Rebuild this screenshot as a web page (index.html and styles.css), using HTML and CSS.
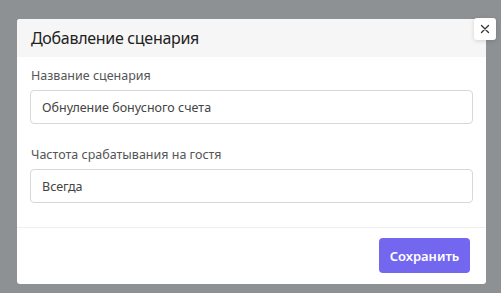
FILE: index.html
```html
<!DOCTYPE html>
<html lang="ru">
<head>
  <meta charset="UTF-8">
  <meta name="viewport" content="width=device-width, initial-scale=1.0">
  <title>Добавление сценария</title>
  <link rel="stylesheet" href="styles.css">
</head>
<body>
  <div class="overlay">
    <div class="modal">
      <button class="close" type="button">
        <svg width="10" height="10" viewBox="0 0 10 10"><path d="M1.5 1.5L8.5 8.5M8.5 1.5L1.5 8.5" stroke="#333" stroke-width="1.3" stroke-linecap="round"/></svg>
      </button>
      <div class="modal-header">Добавление сценария</div>
      <div class="modal-body">
        <div class="field">
          <div class="label">Название сценария</div>
          <div class="input">Обнуление бонусного счета</div>
        </div>
        <div class="field">
          <div class="label">Частота срабатывания на гостя</div>
          <div class="input">Всегда</div>
        </div>
      </div>
      <div class="modal-footer">
        <button class="btn" type="button">Сохранить</button>
      </div>
    </div>
  </div>
</body>
</html>
```

FILE: styles.css
```css
body {
  margin: 0;
  padding: 0;
  font-family: "Noto Sans", Arial, sans-serif;
  background-color: #8e9194;
  overflow: hidden;
}
.overlay {
  width: 501px;
  height: 293px;
  padding: 19px 0 0 17px;
  box-sizing: border-box;
}
.modal {
  position: relative;
  width: 469px;
  height: 265px;
  background-color: #fff;
  border-radius: 3px;
  display: flex;
  flex-direction: column;
}
.close {
  position: absolute;
  top: -1px;
  right: -10px;
  width: 22px;
  height: 22px;
  padding: 0;
  border: none;
  border-radius: 3px;
  background-color: #fff;
  box-shadow: 0 1px 4px rgba(0, 0, 0, 0.15);
  display: flex;
  align-items: center;
  justify-content: center;
}
.modal-header {
  height: 38px;
  background-color: #f6f6f6;
  padding: 0 14px;
  display: flex;
  align-items: center;
  font-size: 16px;
  color: #222;
  letter-spacing: -0.3px;
  border-radius: 3px 3px 0 0;
}
.modal-body {
  padding: 10px 13px 0;
  height: 171px;
  box-sizing: border-box;
  border-bottom: 1px solid #efefef;
}
.field {
  margin-bottom: 22px;
}
.label {
  font-size: 12.5px;
  color: #555;
  line-height: 17px;
  padding-left: 1px;
  margin-bottom: 6px;
}
.input {
  height: 34px;
  box-sizing: border-box;
  border: 1px solid #d8d8d8;
  border-radius: 4px;
  padding: 0 11px;
  display: flex;
  align-items: center;
  font-size: 12.5px;
  color: #444;
}
.modal-footer {
  flex: 1;
  display: flex;
  justify-content: flex-end;
  align-items: flex-start;
  padding: 10px 16px 0;
}
.btn {
  width: 91px;
  height: 35px;
  border: none;
  border-radius: 4px;
  background-color: #7367f0;
  color: #fff;
  font-family: "Noto Sans", Arial, sans-serif;
  font-size: 13px;
  font-weight: 600;
}
```
